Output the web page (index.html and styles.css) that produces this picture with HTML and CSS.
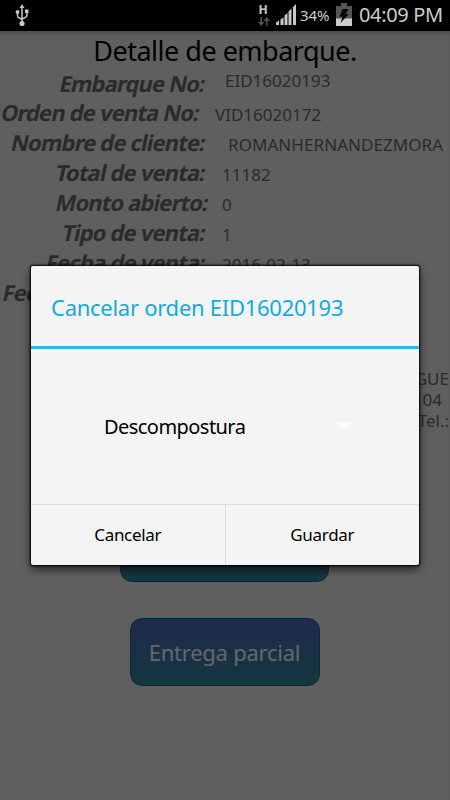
FILE: index.html
```html
<!DOCTYPE html>
<html lang="es">
  <head>
    <meta charset="UTF-8" />
    <meta name="viewport" content="width=device-width, initial-scale=1.0" />
    <title>Detalle de embarque</title>
    <link rel="stylesheet" href="styles.css">
  </head>
  <body>
    <header class="status-bar">
      <svg class="usb" width="14" height="23" viewBox="0 0 14 23" fill="none" stroke="#c8c8c8">
        <path d="M7 4v15M2.500 8v3.500q0 2 2 2.500L7 15.500M12 8v3q0 2-2 2.500L7 15" stroke-width="1.500"/>
        <path d="M7 0l2.500 4h-5z" fill="#c8c8c8" stroke="none"/>
        <circle cx="2.500" cy="8" r="1.900" fill="#c8c8c8" stroke="none"/>
        <path d="M10 5.500h3.500v3.500H10z" fill="#c8c8c8" stroke="none"/>
        <circle cx="7" cy="19.500" r="2.600" fill="#c8c8c8" stroke="none"/>
      </svg>
      <div class="network">
        <span>H</span>
        <svg width="12" height="9" viewBox="0 0 12 9" fill="#555">
          <path d="M2.500 0h1.500v5h2.300L3.200 9 0 5h2.500zM8 9h1.500V4H12L8.700 0 5.700 4H8z"/>
        </svg>
      </div>
      <svg class="signal" width="21" height="21" viewBox="0 0 21 21" fill="#c8c8c8">
        <path d="M0 18.500l3-2V21H0zM4.500 15.500l3-2V21h-3zM8.500 11.500l3-2.500v12h-3zM12.500 7.500l3-3V21h-3zM17 3l3-3v21h-3z"/>
      </svg>
      <span class="percent">34%</span>
      <svg class="battery" width="16" height="23" viewBox="0 0 16 23">
        <path d="M0 3h5V0h6v3h5v13H0z" fill="#555"/>
        <path d="M0 15.500h16V23H0z" fill="#ccc"/>
        <path d="M6.500 6h6L9.700 11h3L4.500 20l2.200-6.500H3.500z" fill="#080808"/>
      </svg>
      <span class="clock">04:09 PM</span>
    </header>

    <main class="screen">
      <h1>Detalle de embarque.</h1>
      <dl class="details">
        <div class="row shipment"><dt>Embarque No:</dt><dd>EID16020193</dd></div>
        <div class="row order"><dt>Orden de venta No:</dt><dd>VID16020172</dd></div>
        <div class="row client"><dt>Nombre de cliente:</dt><dd>ROMANHERNANDEZMORA</dd></div>
        <div class="row"><dt>Total de venta:</dt><dd>11182</dd></div>
        <div class="row open"><dt>Monto abierto:</dt><dd>0</dd></div>
        <div class="row"><dt>Tipo de venta:</dt><dd>1</dd></div>
        <div class="row"><dt>Fecha de venta:</dt><dd>2016-02-13</dd></div>
        <div class="row"><dt>Fec</dt></div>
      </dl>
      <p class="address">GUE<br><span class="number">04</span><br>Tel.:</p>
      <div class="actions">
        <div class="action wide"></div>
        <button class="action">Entrega parcial</button>
      </div>
      <div class="dim"></div>
    </main>

    <!-- Cancel order dialog -->
    <section class="dialog">
      <h2>Cancelar orden EID16020193</h2>
      <div class="spinner">
        <span>Descompostura</span>
        <svg width="12" height="7" viewBox="0 0 12 7" fill="#fff"><path d="M0 0h12L6 7z"/></svg>
      </div>
      <div class="buttons">
        <button>Cancelar</button>
        <button>Guardar</button>
      </div>
    </section>
  </body>
</html>
```

FILE: styles.css
```css
* { box-sizing: border-box; font-family: "Noto Sans", sans-serif; }
body {
  margin: 0;
  width: 450px;
  height: 800px;
  overflow: hidden;
  position: relative;
  background: #000;
}
h1, h2, p, dl, dt, dd { margin: 0; font-weight: 400; white-space: nowrap; }
button { border: 0; padding: 0; background: none; }

.status-bar {
  height: 31px;
  display: flex;
  align-items: flex-start;
  color: #ccc;
}
.usb { margin: 4px 0 0 15px; }
.network { width: 12px; margin: 3px 0 0 228px; display: flex; flex-direction: column; align-items: center; }
.network span { font: bold 12px/13px "Noto Sans", sans-serif; height: 14px; }
.network svg { margin-left: 1px; }
.signal { margin: 4px 0 0 7px; }
.percent { width: 31px; margin: 5px 0 0 3px; font-size: 15px; line-height: 21px; letter-spacing: -0.1px; }
.battery { margin: 3px 0 0 5px; }
.clock { margin: 1px 0 0 7px; font-size: 20px; line-height: 28px; letter-spacing: -0.35px; white-space: nowrap; }

.screen { position: relative; height: 769px; background: #ededed; }
.dim { position: absolute; inset: 0; background: rgba(0, 0, 0, 0.6); box-shadow: inset 0 5px 5px -3px rgba(0, 0, 0, 0.25); }
h1 { height: 38px; font-size: 27px; line-height: 40px; letter-spacing: -0.5px; text-align: center; color: #000; }

.details { height: 268px; color: #6c6c6c; }
.row { height: 30px; display: flex; }
.row dt {
  width: 205px;
  margin-right: 17px;
  display: flex;
  justify-content: flex-end;
  font-size: 22px;
  line-height: 28px;
  font-weight: 700;
  letter-spacing: -0.85px;
  transform: skewX(-12deg);
}
.row dd { padding-top: 5px; font-size: 17px; line-height: 24px; letter-spacing: 0; }
.shipment { height: 29px; }
.shipment dt { margin-right: 20px; }
.shipment dd { padding-top: 0; }
.order dt { width: 199px; margin-right: 16px; }
.client dt { margin-right: 23px; }
.client dd { letter-spacing: 0.06px; }
.open dt { width: 208px; margin-right: 14px; }
.row:last-child dt { justify-content: flex-start; padding-left: 3px; }

.address { height: 177px; padding: 31px 1px 0 0; text-align: right; font-size: 17px; line-height: 21px; color: #6c6c6c; }
.number { margin-right: 7px; }
.actions { width: 449px; display: flex; flex-direction: column; align-items: center; gap: 36px; }
.action {
  width: 190px;
  height: 68px;
  border: 1px solid #0b7078;
  border-radius: 12px;
  background: linear-gradient(#5069c3, #35879e);
  color: #fff;
  font-size: 22px;
  letter-spacing: -0.25px;
}
.wide { width: 209px; }

.dialog {
  position: absolute;
  left: 31px;
  top: 266px;
  width: 388px;
  height: 299px;
  border-radius: 2px;
  background: #f4f4f4;
  box-shadow: 0 0 2px 1px #000, 0 4px 10px rgba(0, 0, 0, 0.65);
}
.dialog h2 {
  height: 83px;
  padding-left: 20px;
  border-bottom: 3px solid #33b5e5;
  font-size: 22px;
  line-height: 82px;
  letter-spacing: -0.27px;
  color: #0dade0;
}
.spinner { height: 155px; padding: 0 69px 0 73px; display: flex; align-items: center; justify-content: space-between; font-size: 20px; letter-spacing: -0.55px; }
.buttons { height: 61px; display: flex; border-top: 1px solid #ddd; }
.buttons button { flex: 1; padding-bottom: 2px; font-size: 17px; letter-spacing: -0.3px; color: #000; }
.buttons button + button { border-left: 1px solid #ddd; }
```
